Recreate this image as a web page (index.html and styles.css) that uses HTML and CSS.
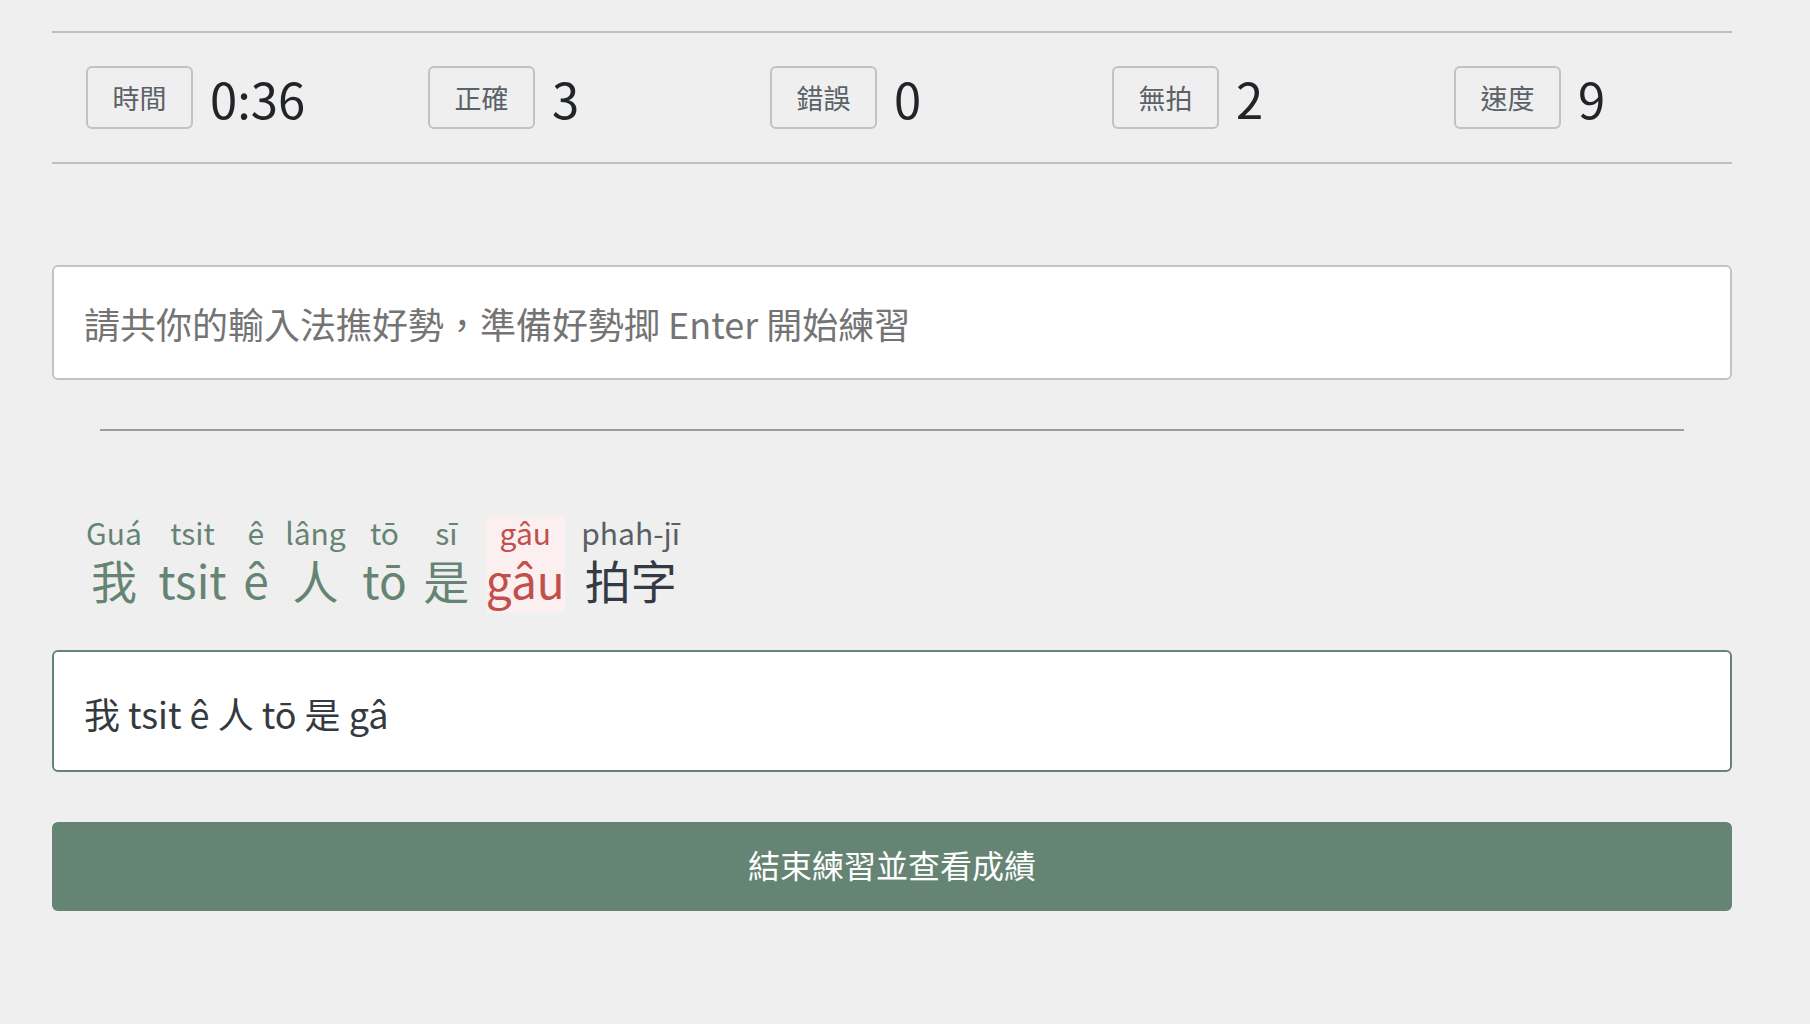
FILE: index.html
```html
<!DOCTYPE html>
<html lang="zh-Hant">

<head>
    <meta charset="UTF-8">
    <meta name="viewport" content="width=device-width, initial-scale=1.0">
    <title>拍字練習</title>
    <link rel="stylesheet" href="styles.css">
</head>

<body>
    <div class="container">
        <div class="stats">
            <div class="stat">
                <span class="stat-label">時間</span>
                <span class="stat-value">0:36</span>
            </div>
            <div class="stat">
                <span class="stat-label">正確</span>
                <span class="stat-value">3</span>
            </div>
            <div class="stat">
                <span class="stat-label">錯誤</span>
                <span class="stat-value">0</span>
            </div>
            <div class="stat">
                <span class="stat-label">無拍</span>
                <span class="stat-value">2</span>
            </div>
            <div class="stat">
                <span class="stat-label">速度</span>
                <span class="stat-value">9</span>
            </div>
        </div>

        <input type="text" class="ready-box" placeholder="請共你的輸入法撨好勢，準備好勢揤 Enter 開始練習">

        <hr class="divider">

        <div class="sentence">
            <span class="word done"><span class="lomaji">Guá</span><span class="hanji">我</span></span>
            <span class="word done"><span class="lomaji">tsit</span><span class="hanji">tsit</span></span>
            <span class="word done"><span class="lomaji">ê</span><span class="hanji">ê</span></span>
            <span class="word done"><span class="lomaji">lâng</span><span class="hanji">人</span></span>
            <span class="word done"><span class="lomaji">tō</span><span class="hanji">tō</span></span>
            <span class="word done"><span class="lomaji">sī</span><span class="hanji">是</span></span>
            <span class="word current"><span class="lomaji">gâu</span><span class="hanji">gâu</span></span>
            <span class="word"><span class="lomaji">phah-jī</span><span class="hanji">拍字</span></span>
        </div>

        <input type="text" class="typing-box" value="我 tsit ê 人 tō 是 gâ">

        <button class="finish-btn">結束練習並查看成績</button>
    </div>
</body>

</html>
```

FILE: styles.css
```css
body {
    margin: 0;
    background-color: #efefef;
    color: #212529;
    font-family: "Noto Sans CJK TC", "Noto Sans", sans-serif;
}

.container {
    width: 1680px;
    margin-left: 52px;
    padding-top: 31px;
}

.stats {
    display: grid;
    grid-template-columns: repeat(5, 342px);
    align-items: center;
    padding: 33px 0 33px 34px;
    border-top: 2px solid #bfbfbf;
    border-bottom: 2px solid #bfbfbf;
}

.stat {
    display: flex;
    align-items: center;
}

.stat-label {
    display: flex;
    align-items: center;
    justify-content: center;
    box-sizing: border-box;
    width: 107px;
    height: 63px;
    border: 2px solid #c2c2c2;
    border-radius: 6px;
    font-size: 27px;
    color: #5b6166;
}

.stat-value {
    margin-left: 17px;
    font-size: 49px;
    line-height: 1;
    color: #212529;
}

.ready-box,
.typing-box {
    display: block;
    box-sizing: border-box;
    width: 100%;
    padding: 0 30px;
    background-color: white;
    border-radius: 6px;
    font-family: inherit;
    font-size: 36px;
    outline: none;
}

.ready-box {
    margin-top: 101px;
    height: 115px;
    border: 2px solid #c4c4c4;
}

.ready-box::placeholder {
    color: #747474;
}

.divider {
    margin: 49px 48px 0;
    border: none;
    border-top: 2px solid #9c9c9c;
}

.sentence {
    display: flex;
    gap: 16.5px;
    margin-top: 86px;
    padding-left: 34px;
    color: #658473;
}

.word {
    display: flex;
    flex-direction: column;
    align-items: center;
    padding-bottom: 1px;
}

.lomaji {
    font-size: 30px;
    line-height: 30px;
}

.hanji {
    font-size: 46px;
    line-height: 65px;
}

.word.current {
    background-color: #fcefef;
    color: #c0504d;
}

.word:last-child .lomaji {
    color: #5a5f64;
}

.word:last-child .hanji {
    color: #343a44;
}

.typing-box {
    margin-top: 37px;
    height: 122px;
    padding-top: 4px;
    border: 2px solid #658473;
    color: #343a40;
}

.finish-btn {
    display: block;
    width: 100%;
    height: 89px;
    margin-top: 50px;
    padding-bottom: 6px;
    background-color: #658473;
    color: white;
    border: none;
    border-radius: 6px;
    font-family: inherit;
    font-size: 32px;
    cursor: pointer;
}
```
